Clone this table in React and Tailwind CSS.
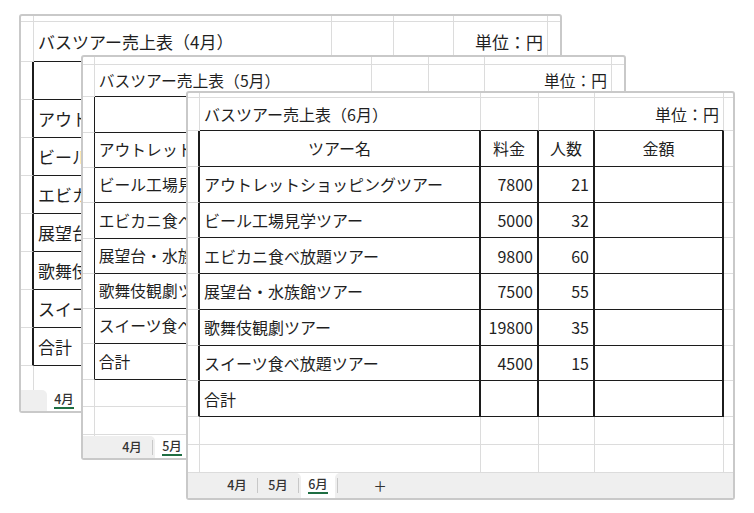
import { Fragment } from 'react';
import clsx from 'clsx';

const tours = [
  ['アウトレットショッピングツアー', 7800, 21],
  ['ビール工場見学ツアー', 5000, 32],
  ['エビカニ食べ放題ツアー', 9800, 60],
  ['展望台・水族館ツアー', 7500, 55],
  ['歌舞伎観劇ツアー', 19800, 35],
  ['スイーツ食べ放題ツアー', 4500, 15],
];

// one spreadsheet cell; dark borders belong to the table, light ones are gridlines
function Cell({ w, r, b, className, children }) {
  return (
    <div
      className={clsx(
        'h-full shrink-0 border-b flex items-center leading-none',
        w,
        r ? 'border-r-2 border-r-[#1c1c1c]' : 'border-r border-r-[#dcdcdc]',
        b ? 'border-b-[#1c1c1c]' : 'border-b-[#dcdcdc]',
        className
      )}
    >
      {children}
    </div>
  );
}

function TableRow({ amountW, cells, header }) {
  return (
    <div className="flex h-[35.75px]">
      <Cell w="w-[12px]" r />
      <Cell w="w-[281px]" r b className={header ? 'justify-center' : 'pl-[4px]'}>
        <span className="whitespace-nowrap">{cells[0]}</span>
      </Cell>
      <Cell w="w-[58px]" r b className={header ? 'justify-center' : 'justify-end pr-[4px]'}>
        {cells[1]}
      </Cell>
      <Cell w="w-[56px]" r b className={header ? 'justify-center' : 'justify-end pr-[4px]'}>
        {cells[2]}
      </Cell>
      <Cell w={amountW} r b className="justify-center">
        {cells[3]}
      </Cell>
      <Cell w="w-[140px]" />
    </div>
  );
}

function BlankRow({ h, amountW }) {
  return (
    <div className={clsx('flex', h)}>
      <Cell w="w-[12px]" />
      <Cell w="w-[281px]" />
      <Cell w="w-[58px]" />
      <Cell w="w-[56px]" />
      <Cell w={amountW} />
      <Cell w="w-[140px]" />
    </div>
  );
}

function Sheet({ month, zoom, topH, titleH, amountW }) {
  return (
    <div className="min-h-0 flex-1 overflow-hidden">
      <div className={clsx('text-[16px] text-[#1f1f1f]', zoom)}>
        <BlankRow h={topH} amountW={amountW} />
        <div className={clsx('flex', titleH)}>
          <Cell w="w-[12px]" />
          <Cell w="w-[281px]" b className="pl-[4px]">
            <span className="whitespace-nowrap">バスツアー売上表（{month}）</span>
          </Cell>
          <Cell w="w-[58px]" b />
          <Cell w="w-[56px]" b />
          <Cell w={amountW} b className="justify-end pr-[4px]">
            <span className="whitespace-nowrap">単位：円</span>
          </Cell>
          <Cell w="w-[140px]" />
        </div>
        <TableRow amountW={amountW} header cells={['ツアー名', '料金', '人数', '金額']} />
        {tours.map((t) => (
          <TableRow key={t[0]} amountW={amountW} cells={[t[0], t[1], t[2], '']} />
        ))}
        <TableRow amountW={amountW} cells={['合計', '', '', '']} />
        <BlankRow h="h-[28px]" amountW={amountW} />
        <BlankRow h="h-[28px]" amountW={amountW} />
        <BlankRow h="h-[28px]" amountW={amountW} />
      </div>
    </div>
  );
}

function TabBar({ h, navW, before, current }) {
  return (
    <div className={clsx('flex shrink-0 bg-white text-[12.5px] font-medium text-[#333333]', h)}>
      <div className="flex items-center rounded-tr-[5px] bg-[#efefef]">
        <div className={navW} />
        {before.map((m) => (
          <Fragment key={m}>
            <div className="w-[40px] text-center">{m}</div>
            <div className="h-[15px] w-px bg-[#c8c8c8]" />
          </Fragment>
        ))}
        <div className="w-[2px]" />
      </div>
      <div className="flex w-[34px] shrink-0 items-center justify-center">
        <span className="border-b-2 border-[#1e6e42] pb-[1px] leading-[14px]">{current}</span>
      </div>
      <div className="flex flex-1 items-center rounded-tl-[5px] bg-[#efefef]">
        <div className="w-[2px]" />
        <div className="h-[15px] w-px bg-[#c8c8c8]" />
        <div className="w-[84px] text-center text-[21px] font-extralight leading-none text-[#333333]">+</div>
      </div>
    </div>
  );
}

function Window({ className, children }) {
  return (
    <div
      className={clsx(
        'absolute flex flex-col overflow-hidden rounded-[3px] border-2 border-[#c9c9c9] bg-white',
        className
      )}
    >
      {children}
    </div>
  );
}

export default function App() {
  return (
    <div className="relative h-[513px] w-[754px] overflow-hidden bg-white font-['Noto_Sans_CJK_JP','Noto_Sans',sans-serif]">
      <Window className="left-[19px] top-[14px] h-[399px] w-[543px]">
        <Sheet month="4月" zoom="[zoom:1.063]" topH="h-[5.6px]" titleH="h-[37.6px]" amountW="w-[89px]" />
        <TabBar h="h-[21px]" navW="w-[24px]" before={[]} current="4月" />
      </Window>
      <Window className="left-[81px] top-[55px] h-[405px] w-[545px]">
        <Sheet month="5月" zoom="[zoom:0.987]" topH="h-[8px]" titleH="h-[33px]" amountW="w-[129px]" />
        <TabBar h="h-[22px]" navW="w-[29px]" before={['4月']} current="5月" />
      </Window>
      <Window className="left-[186px] top-[91px] h-[409px] w-[549px]">
        <Sheet month="6月" zoom="" topH="h-[5px]" titleH="h-[33px]" amountW="w-[129px]" />
        <TabBar h="h-[25px]" navW="w-[29px]" before={['4月', '5月']} current="6月" />
      </Window>
    </div>
  );
}
